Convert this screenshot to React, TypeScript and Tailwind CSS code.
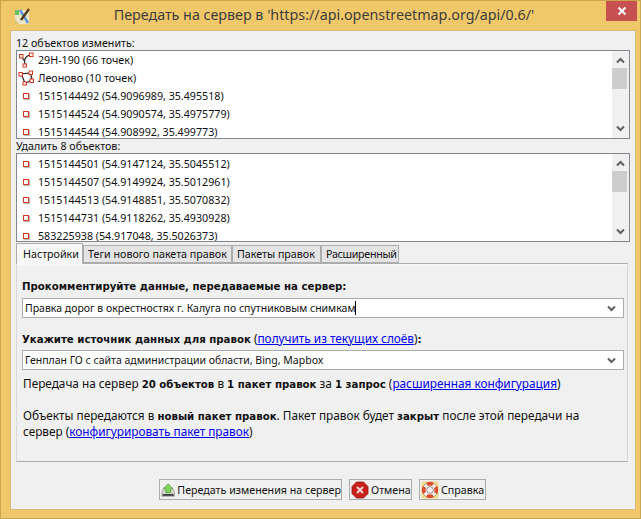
import React from "react";

const changed = [
  "1515144492 (54.9096989, 35.495518)",
  "1515144524 (54.9090574, 35.4975779)",
  "1515144544 (54.908992, 35.499773)",
];

const deleted = [
  "1515144501 (54.9147124, 35.5045512)",
  "1515144507 (54.9149924, 35.5012961)",
  "1515144513 (54.9148851, 35.5070832)",
  "1515144731 (54.9118262, 35.4930928)",
  "583225938 (54.917048, 35.5026373)",
];

function NodeIcon() {
  return (
    <span className="w-[16px] h-[16px] mr-[4px] flex items-center justify-center shrink-0">
      <span className="w-[6px] h-[6px] border border-[#d8371c] bg-white shadow-[1px_1px_1px_#bbb]" />
    </span>
  );
}

function WayIcon() {
  return (
    <svg width="16" height="16" viewBox="0 0 16 16" className="mr-[4px] shrink-0">
      <path d="M3 4 L6.5 9 L7 13 M6.5 9 Q7 4 13 2.5" fill="none" stroke="#222" strokeWidth="1.2" />
      <rect x="1.5" y="2.5" width="3.5" height="3.5" fill="#fff" stroke="#d8371c" />
      <rect x="11.5" y="1" width="3.5" height="3.5" fill="#fff" stroke="#d8371c" />
      <rect x="5" y="12" width="3.5" height="3" fill="#fff" stroke="#d8371c" />
    </svg>
  );
}

function AreaIcon() {
  return (
    <svg width="16" height="16" viewBox="0 0 16 16" className="mr-[4px] shrink-0">
      <path d="M2.5 4 L12.5 3 L14 10 L7 13.5 L5 8 Z" fill="none" stroke="#222" strokeWidth="1.2" />
      <rect x="1" y="2.5" width="3.5" height="3.5" fill="#fff" stroke="#d8371c" />
      <rect x="11" y="1" width="3.5" height="3.5" fill="#fff" stroke="#d8371c" />
      <rect x="12" y="9" width="3.5" height="3.5" fill="#fff" stroke="#d8371c" />
      <rect x="5" y="12" width="3.5" height="3" fill="#fff" stroke="#d8371c" />
    </svg>
  );
}

function Row({ icon, text }: { icon: React.ReactNode; text: string }) {
  return (
    <div className="h-[18px] pl-[1px] flex items-center whitespace-nowrap">
      {icon}
      <span>{text}</span>
    </div>
  );
}

function Chevron({ up }: { up?: boolean }) {
  return (
    <svg width="9" height="7" viewBox="0 0 9 7">
      <path d={up ? "M1 5.5 L4.5 2 L8 5.5" : "M1 1.5 L4.5 5 L8 1.5"} fill="none" stroke="#5f5f5f" strokeWidth="2" />
    </svg>
  );
}

function ListBox({ children }: { children: React.ReactNode }) {
  return (
    <div className="h-[89px] border border-[#828790] bg-white flex overflow-hidden">
      <div className="flex-1 overflow-hidden">{children}</div>
      <div className="w-[17px] bg-[#f0f0f0] flex flex-col items-center justify-between py-[6px] relative">
        <Chevron up />
        <div className="absolute left-0 top-[17px] w-[15px] bg-[#cdcdcd] h-[21px]" />
        <Chevron />
      </div>
    </div>
  );
}

function Combo({ text, caret }: { text: string; caret?: boolean }) {
  return (
    <div className="h-[20px] border border-[#ababab] bg-white flex items-center pl-[2px] pr-[7px] justify-between whitespace-nowrap text-[10.5px]">
      <span className="flex items-center">
        {text}
        {caret && <span className="inline-block w-px h-[14px] bg-black" />}
      </span>
      <Chevron />
    </div>
  );
}

function Link({ children }: { children: React.ReactNode }) {
  return <span className="text-[#0000ee] underline">{children}</span>;
}

function Bold({ children }: { children: React.ReactNode }) {
  return <b className="font-bold text-[10.2px]" style={{ fontFamily: '"DejaVu Sans", sans-serif' }}>{children}</b>;
}

function Tab({ label, active, width }: { label: string; active?: boolean; width: string }) {
  return active ? (
    <div className={`h-[21px] pl-[6px] -mb-px z-10 relative bg-[#f7f7f7] border border-b-0 border-[#acacac] flex items-center ${width}`}>
      {label}
    </div>
  ) : (
    <div className={`h-[18px] pl-[4px] bg-[#e4e4e4] border border-[#acacac] flex items-center whitespace-nowrap overflow-hidden ${width}`}>
      {label}
    </div>
  );
}

function Button({ icon, label, className }: { icon: React.ReactNode; label: string; className: string }) {
  return (
    <div className={`h-[21px] bg-[#f0f0f0] border border-[#acacac] flex items-center pl-px whitespace-nowrap ${className}`}>
      {icon}
      <span className="ml-[2px]">{label}</span>
    </div>
  );
}

function UploadIcon() {
  return (
    <svg width="18" height="18" viewBox="0 0 18 18">
      <path d="M1 12 L3.5 6 H14.5 L17 12 V17 H1 Z" fill="#d4d4cc" stroke="#888" strokeWidth="0.7" />
      <rect x="2" y="14" width="14" height="2.5" fill="#4a4a4a" />
      <path d="M9 1 L15 7.5 H12 V12.5 H6 V7.5 H3 Z" fill="#7ed35c" stroke="#4a9c33" strokeWidth="0.8" />
    </svg>
  );
}

function CancelIcon() {
  return (
    <svg width="18" height="18" viewBox="0 0 18 18">
      <path d="M5.5 1 H12.5 L17 5.5 V12.5 L12.5 17 H5.5 L1 12.5 V5.5 Z" fill="#c8201c" stroke="#8a1512" strokeWidth="0.8" />
      <path d="M6 6 L12 12 M12 6 L6 12" stroke="#f4d6d6" strokeWidth="2" />
    </svg>
  );
}

function HelpIcon() {
  return (
    <svg width="18" height="18" viewBox="0 0 18 18">
      <rect x="0.5" y="0.5" width="17" height="17" rx="2" fill="#f1d98a" />
      <circle cx="9" cy="9" r="7.8" fill="#8a7a6a" />
      <circle cx="9" cy="9" r="5.4" fill="none" stroke="#f4f0ea" strokeWidth="4" />
      <path d="M6 3.5 A6 6 0 0 1 12 3.5 M14.5 6 A6 6 0 0 1 14.5 12 M12 14.5 A6 6 0 0 1 6 14.5 M3.5 12 A6 6 0 0 1 3.5 6" fill="none" stroke="#dd4a30" strokeWidth="3.6" />
      <circle cx="9" cy="9" r="3.2" fill="#f0f0f0" stroke="#8a7a6a" strokeWidth="0.6" />
    </svg>
  );
}

function AppIcon() {
  return (
    <svg width="16" height="16" viewBox="0 0 16 16">
      <rect x="1" y="2" width="14" height="14" fill="#ece6c8" />
      <rect x="1" y="2" width="4" height="5" fill="#63c060" />
      <path d="M1 11 L5 16 H1 Z" fill="#d9c27a" />
      <path d="M6 2 L14 15" stroke="#5a94d8" strokeWidth="2.4" />
      <path d="M15 1 L7 12" stroke="#5a3a1c" strokeWidth="2.4" />
    </svg>
  );
}

export default function App() {
  return (
    <div
      className="w-[641px] h-[519px] bg-[#f0c869] flex flex-col border border-[#c9a750] text-[10.7px] leading-[14px] text-[#111] overflow-hidden"
      style={{ fontFamily: '"Noto Sans", sans-serif' }}
    >
      {/* Title bar */}
      <div className="h-[29px] shrink-0 flex items-start relative pl-[13px] pt-[7px]">
        <AppIcon />
        <div className="absolute left-0 right-[-7px] top-[4px] text-center text-[14.3px] leading-[20px] text-[#3d3d3d]">
          Передать на сервер в 'https://api.openstreetmap.org/api/0.6/'
        </div>
        <div className="absolute right-[3px] top-0 w-[31px] h-[20px] bg-[#c75050] flex items-center justify-center">
          <svg width="10" height="10" viewBox="0 0 10 10">
            <path d="M1.5 1.5 L8.5 8.5 M8.5 1.5 L1.5 8.5" stroke="#fff" strokeWidth="2" />
          </svg>
        </div>
      </div>

      {/* Client area */}
      <div className="mx-[9px] w-[626px] h-[480px] bg-[#f0f0f0] border border-[#d8bd72] px-[5px] flex flex-col">
        <div className="h-[19px] pt-[5px]">12 объектов изменить:</div>
        <ListBox>
          <Row icon={<WayIcon />} text="29Н-190 (66 точек)" />
          <Row icon={<AreaIcon />} text="Леоново (10 точек)" />
          {changed.map((t) => (
            <Row key={t} icon={<NodeIcon />} text={t} />
          ))}
        </ListBox>
        <div className="h-[14px] leading-[14px]">Удалить 8 объектов:</div>
        <ListBox>
          <div className="pt-px">
            {deleted.map((t) => (
              <Row key={t} icon={<NodeIcon />} text={t} />
            ))}
          </div>
        </ListBox>

        {/* Tabs */}
        <div className="flex items-end h-[21px] shrink-0">
          <Tab label="Настройки" active width="w-[67px]" />
          <Tab label="Теги нового пакета правок" width="w-[149px]" />
          <Tab label="Пакеты правок" width="w-[89px]" />
          <Tab label="Расширенный" width="w-[78px] tracking-[-0.3px]" />
        </div>
        <div className="h-[199px] w-[612px] border border-t-[#acacac] border-[#d9d9d9] border-b-[#acacac] flex flex-col text-[11.8px]">
          <div className="h-[2px] bg-[#f7f7f7] shrink-0" />
          <div className="pl-[5px] pr-[3px]">
            <div className="mt-[12px] h-[14px]">
              <Bold>Прокомментируйте данные, передаваемые на сервер:</Bold>
            </div>
            <div className="mt-[6px]">
              <Combo text="Правка дорог в окрестностях г. Калуга по спутниковым снимкам" caret />
            </div>
            <div className="mt-[13px] h-[14px]">
              <Bold>Укажите источник данных для правок</Bold> (<Link>получить из текущих слоёв</Link>)<Bold>:</Bold>
            </div>
            <div className="mt-[5px]">
              <Combo text="Генплан ГО с сайта администрации области, Bing, Mapbox" />
            </div>
            <div className="mt-[6px] h-[14px] pl-px whitespace-nowrap">
              Передача на сервер <Bold>20 объектов</Bold> в <Bold>1 пакет правок</Bold> за <Bold>1 запрос</Bold> (
              <Link>расширенная конфигурация</Link>)
            </div>
            <div className="mt-[18px] pl-px leading-[15px] whitespace-nowrap">
              Объекты передаются в <Bold>новый пакет правок</Bold>. Пакет правок будет <Bold>закрыт</Bold> после этой передачи на
              <br />
              сервер (<Link>конфигурировать пакет правок</Link>)
            </div>
          </div>
        </div>

        {/* Buttons */}
        <div className="flex mt-[17px] ml-[143px]">
          <Button icon={<UploadIcon />} label="Передать изменения на сервер" className="w-[183px]" />
          <Button icon={<CancelIcon />} label="Отмена" className="w-[63px] ml-[7px]" />
          <Button icon={<HelpIcon />} label="Справка" className="w-[67px] ml-[7px]" />
        </div>
      </div>
    </div>
  );
}
